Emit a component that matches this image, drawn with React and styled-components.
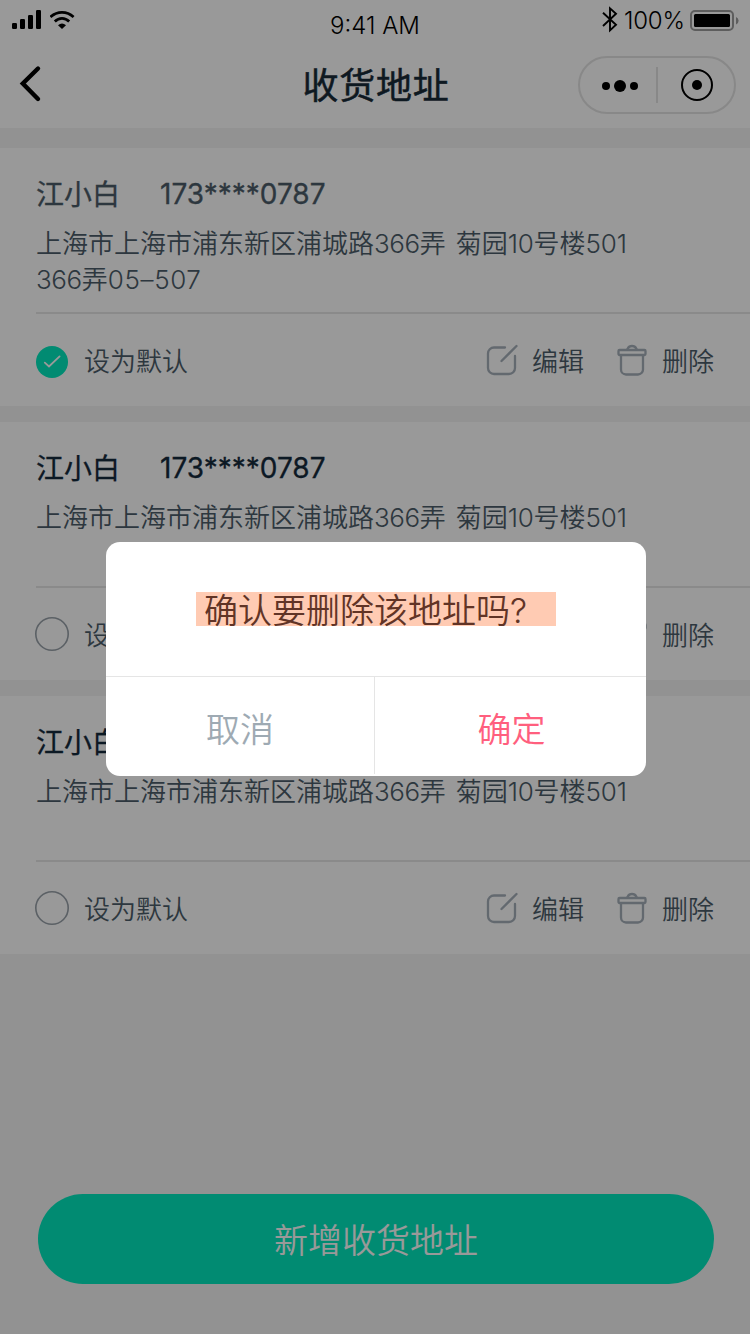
import React from "react";
import styled, { createGlobalStyle } from "styled-components";

const GlobalStyle = createGlobalStyle`
  * { box-sizing: border-box; }
  body {
    margin: 0;
    background: #f3f3f3;
    font-family: Inter, "Noto Sans CJK SC", sans-serif;
    font-weight: 350;
    color: #4c5d69;
  }
  button { font: inherit; border: 0; padding: 0; background: none; color: inherit; }
`;

const Page = styled.div`
  position: relative;
  width: 750px;
  height: 1334px;
  display: flex;
  flex-direction: column;
  overflow: hidden;
  background: #f3f3f3;
`;

const StatusBar = styled.div`
  height: 40px;
  display: grid;
  grid-template-columns: 1fr auto 1fr;
  background: #fff;
  color: #000;
`;

const Signals = styled.div`
  display: flex;
  align-items: flex-start;
  gap: 8px;
  padding: 10px 0 0 12px;
`;

const Time = styled.div`
  padding-top: 10px;
  font-size: 24px;
  line-height: 32px;
  letter-spacing: 0;
`;

const Power = styled.div`
  display: flex;
  justify-content: flex-end;
  align-items: flex-start;
  padding: 6px 11px 0 0;
`;

const Percent = styled.span`
  width: 61px;
  margin: 0 5px 0 6px;
  font-size: 24px;
  line-height: 30px;
  letter-spacing: -0.2px;
  white-space: nowrap;
`;

const BatteryIcon = styled.svg`
  margin-top: 4px;
`;

const NavBar = styled.header`
  height: 88px;
  display: grid;
  grid-template-columns: 1fr auto 1fr;
  align-items: center;
  padding: 0 14px 0 18px;
  background: #fff;
`;

const NavTitle = styled.h1`
  margin: 4px 0 0 -2px;
  font-size: 36px;
  line-height: 50px;
  font-weight: 400;
  letter-spacing: 0.7px;
  -webkit-text-stroke: 0.5px currentColor;
  color: #182b38;
`;

const Capsule = styled.div`
  justify-self: end;
  margin-top: 2px;
  width: 158px;
  height: 58px;
  display: flex;
  align-items: center;
  border: 2px solid #e3e3e3;
  border-radius: 29px;
`;

const CapsuleHalf = styled.div`
  flex: 0 0 76px;
  height: 36px;
  display: flex;
  align-items: center;
  justify-content: center;
  padding-left: ${(p) => p.$inset || 0}px;
  border-left: ${(p) => (p.$divided ? "2px solid #e3e3e3" : "0")};
`;

const AddressList = styled.main`
  display: flex;
  flex-direction: column;
  gap: 16px;
  padding-top: 20px;
`;

const Card = styled.section`
  height: 258px;
  padding-left: 36px;
  background: #fff;
`;

const Details = styled.div`
  height: 166px;
  padding-top: 27px;
  border-bottom: 2px solid #e6e6e6;
`;

const Recipient = styled.div`
  display: flex;
  gap: 40px;
  height: 40px;
  font-size: 28px;
  line-height: 40px;
  font-weight: 400;
  color: ${(p) => (p.$muted ? "#4c5d69" : "#152b3c")};
  -webkit-text-stroke: 0.3px currentColor;
`;

const Phone = styled.span`
  margin-top: -1px;
`;

const Address = styled.p`
  margin: 11px 0 0;
  font-size: 26px;
  line-height: 36px;
  word-spacing: 2.5px;
`;

const Digits = styled.span`
  letter-spacing: ${(p) => p.$tracking ?? -0.2}px;
`;

const Actions = styled.div`
  height: 92px;
  display: flex;
  align-items: center;
  padding-right: 36px;
  font-size: 26px;
  line-height: 36px;
`;

const DefaultOption = styled.div`
  flex: 1;
  display: flex;
  align-items: center;
  gap: 15px;
  margin-left: -1px;
`;

const Action = styled.button`
  display: flex;
  align-items: center;
  gap: ${(p) => p.$gap}px;
  margin-left: 33px;
`;

const Label = styled.span`
  padding-top: 4px;
`;

const Footer = styled.footer`
  margin-top: auto;
  padding: 0 36px 50px 38px;
`;

const AddButton = styled.button`
  display: block;
  width: 100%;
  height: 90px;
  padding-top: 3px;
  border-radius: 45px;
  background: #03e8be;
  color: #fff;
  font-size: 34px;
  line-height: 85px;
`;

const Backdrop = styled.div`
  position: absolute;
  inset: 0;
  display: flex;
  align-items: flex-start;
  padding: 542px 104px 0 106px;
  background: rgba(0, 0, 0, 0.4);
`;

const Dialog = styled.div`
  width: 540px;
  height: 234px;
  display: flex;
  flex-direction: column;
  border-radius: 14px;
  overflow: hidden;
  background: #fff;
`;

const DialogBody = styled.div`
  height: 135px;
  padding: 50px 90px 0;
  border-bottom: 1px solid #e5e5e5;
`;

const Question = styled.div`
  height: 34px;
  padding-left: 8px;
  background: #ffcbb3;
  color: #613426;
  font-size: 34px;
  line-height: 38px;
  white-space: nowrap;
`;

const DialogActions = styled.div`
  flex: 1;
  display: flex;
  align-items: flex-start;
`;

const DialogButton = styled.button`
  flex: 0 0 ${(p) => p.$width}px;
  height: 97px;
  padding: 3px 0 0 ${(p) => (p.$divided ? 2 : 0)}px;
  font-size: 34px;
  color: ${(p) => p.$color};
  border-left: ${(p) => (p.$divided ? "1px solid #e5e5e5" : "0")};
`;

const SignalIcon = () => (
  <svg width="30" height="20" viewBox="0 0 30 20">
    <rect x="0" y="13" width="5" height="6" rx="1.2" />
    <rect x="8" y="9" width="5" height="10" rx="1.2" />
    <rect x="16" y="5" width="5" height="14" rx="1.2" />
    <rect x="24" y="0" width="5" height="19" rx="1.2" />
  </svg>
);

const WifiIcon = () => (
  <svg width="26" height="20" viewBox="0 0 26 20" fill="none" stroke="#000" strokeWidth="2.7">
    <path d="M.4 7Q5.500 2.300 12 2.300T23.600 7" />
    <path d="M4.800 11.500Q8 8.300 12 8.300T19.200 11.500" />
    <path d="M12 19 8 15.300q4-3.700 8 0Z" fill="#000" stroke="none" />
  </svg>
);

const BluetoothIcon = () => (
  <svg width="16" height="27" viewBox="0 0 16 27" fill="none" stroke="#000" strokeWidth="1.9">
    <path d="M1 6.800 14 18.700 8 24.400V2.400L14 7.700 1 20" />
  </svg>
);

const Battery = () => (
  <BatteryIcon width="49" height="21" viewBox="0 0 49 21">
    <rect x="1" y="1" width="42" height="19" rx="4" fill="none" stroke="#9b9b9b" strokeWidth="2" />
    <rect x="4" y="4" width="36" height="13" rx="1.5" />
    <path d="M46 7q2.6 1 2.6 3.8T46 14.5Z" fill="#9b9b9b" />
  </BatteryIcon>
);

const BackIcon = () => (
  <svg width="26" height="38" viewBox="0 0 26 38" fill="none" stroke="#000" strokeWidth="4.4" strokeLinecap="round" strokeLinejoin="miter">
    <path d="M20 3.500 4.800 18.500 20 34" />
  </svg>
);

const MoreIcon = () => (
  <svg width="36" height="14" viewBox="0 0 36 14">
    <circle cx="4" cy="8" r="4" />
    <circle cx="18" cy="8" r="6" />
    <circle cx="32" cy="8" r="4" />
  </svg>
);

const TargetIcon = () => (
  <svg width="32" height="32" viewBox="0 0 32 32">
    <circle cx="16" cy="16" r="15" fill="none" stroke="#000" strokeWidth="2" />
    <circle cx="16" cy="16" r="5" />
  </svg>
);

const RadioIcon = ({ checked }) => (
  <svg width="34" height="34" viewBox="0 0 34 34" fill="none" overflow="visible">
    {checked ? (
      <>
        <circle cx="17" cy="19" r="16" fill="#03e8be" />
        <path d="M9.800 19.600 14 23.500 24.600 13.400" stroke="#fff" strokeWidth="1.8" strokeLinecap="round" />
      </>
    ) : (
      <circle cx="17" cy="17" r="16.2" stroke="#98a1a9" strokeWidth="1.6" />
    )}
  </svg>
);

const EditIcon = () => (
  <svg width="32" height="32" viewBox="0 0 32 32" fill="none" stroke="#a5afb9" strokeWidth="2.3" strokeLinecap="round">
    <path d="M19 3.500H8a6 6 0 0 0-6 6V24a6 6 0 0 0 6 6H23a6 6 0 0 0 6-6V12" />
    <path d="M15.500 17 30.500 2" />
  </svg>
);

const TrashIcon = () => (
  <svg width="30" height="32" viewBox="0 0 30 32" fill="none" stroke="#a5afb9" strokeWidth="2.3">
    <rect x="1.500" y="6" width="27" height="5" rx="1" />
    <path d="M9.500 6C11 5.500 10.500 2 15 2s4 3.500 5.500 4" />
    <path d="M4 11V25.500a5 5 0 0 0 5 5H21a5 5 0 0 0 5-5V11" />
  </svg>
);

const addresses = [
  { id: 1, selected: true, extra: true },
  { id: 2 },
  { id: 3 },
];

const AddressCard = ({ selected, extra }) => (
  <Card>
    <Details>
      <Recipient $muted={selected}>
        <span>江小白</span>
        <Phone>173****0787</Phone>
      </Recipient>
      <Address>
        上海市上海市浦东新区浦城路<Digits $tracking={-0.4}>366</Digits>弄 菊园<Digits>10</Digits>号楼<Digits>501</Digits>
        {extra && (
          <>
            <br />
            <Digits $tracking={-0.4}>366</Digits>弄<Digits $tracking={0.6}>05–507</Digits>
          </>
        )}
      </Address>
    </Details>
    <Actions>
      <DefaultOption>
        <RadioIcon checked={selected} />
        <Label>设为默认</Label>
      </DefaultOption>
      <Action $gap={14}><EditIcon /><Label>编辑</Label></Action>
      <Action $gap={15}><TrashIcon /><Label>删除</Label></Action>
    </Actions>
  </Card>
);

export default function App() {
  return (
    <>
      <GlobalStyle />
      <Page>
        <StatusBar>
          <Signals><SignalIcon /><WifiIcon /></Signals>
          <Time>9:41 AM</Time>
          <Power><BluetoothIcon /><Percent>100%</Percent><Battery /></Power>
        </StatusBar>
        <NavBar>
          <BackIcon />
          <NavTitle>收货地址</NavTitle>
          <Capsule>
            <CapsuleHalf $inset={4}><MoreIcon /></CapsuleHalf>
            <CapsuleHalf $divided $inset={3}><TargetIcon /></CapsuleHalf>
          </Capsule>
        </NavBar>
        <AddressList>
          {addresses.map((item) => (
            <AddressCard key={item.id} selected={item.selected} extra={item.extra} />
          ))}
        </AddressList>
        <Footer><AddButton>新增收货地址</AddButton></Footer>
        <Backdrop>
          <Dialog role="dialog">
            <DialogBody><Question>确认要删除该地址吗?</Question></DialogBody>
            <DialogActions>
              <DialogButton $width={268} $color="#9eaab3">取消</DialogButton>
              <DialogButton $width={272} $color="#ff5f7e" $divided>确定</DialogButton>
            </DialogActions>
          </Dialog>
        </Backdrop>
      </Page>
    </>
  );
}
